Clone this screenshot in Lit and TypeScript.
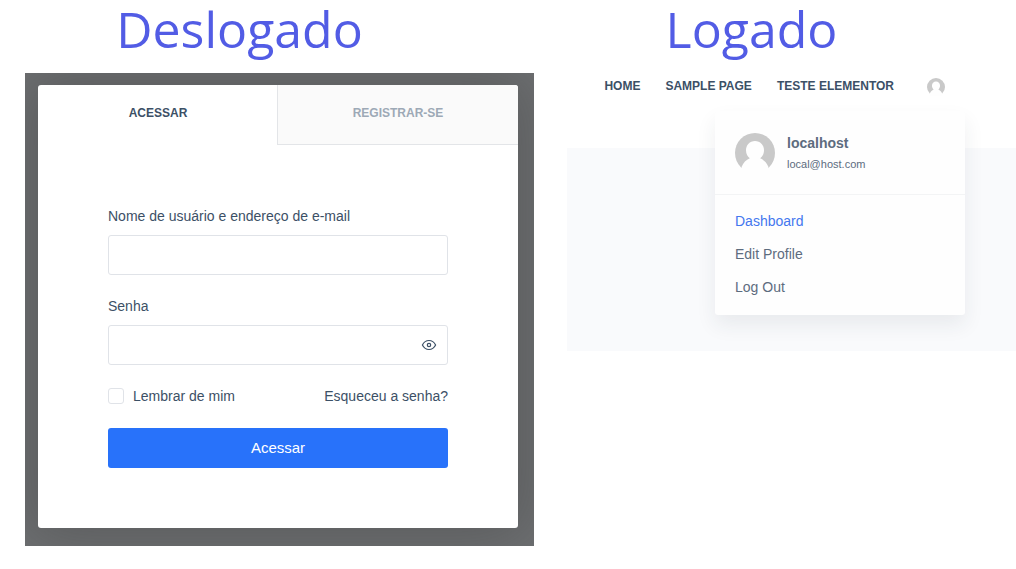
import { LitElement, html, css } from "lit";
import { customElement, state } from "lit/decorators.js";

const base = css`
  :host {
    display: block;
    font-family: "Liberation Sans", Arial, sans-serif;
    font-size: 14px;
    line-height: 22px;
    color: #3c5066;
  }
  * {
    box-sizing: border-box;
  }
  a {
    color: inherit;
    text-decoration: none;
  }
`;

@customElement("user-avatar")
export class UserAvatar extends LitElement {
  static styles = css`
    :host {
      display: block;
    }
    svg {
      display: block;
      width: 100%;
      height: 100%;
    }
  `;

  render() {
    return html`
      <svg viewBox="0 0 40 40" aria-hidden="true">
        <circle cx="20" cy="20" r="20" fill="#c9c9c9" />
        <path
          fill="#fefefe"
          d="M20 8c5.200 0 9 4.100 9 9.300 0 3.400-1.500 6.300-3.800 8 3.800 1.600 6.300 4.200 8.300 8.700V41H6.500v-7c2-4.500 4.500-7.100 8.300-8.700-2.300-1.700-3.800-4.600-3.800-8C11 12.100 14.800 8 20 8z"
        />
      </svg>
    `;
  }
}

@customElement("login-modal")
export class LoginModal extends LitElement {
  @state() private reveal = false;

  static styles = [
    base,
    css`
      .overlay {
        padding: 12px 16px 18px 13px;
        background: #6e7072;
        overflow: hidden;
      }
      .card {
        background: #fff;
        border-radius: 3px;
        box-shadow: 0 0 60px 10px rgba(60, 60, 60, 0.4);
      }
      .tabs {
        display: grid;
        grid-template-columns: 1fr 1fr;
      }
      .tab {
        height: 60px;
        padding: 0 0 4px;
        border: 0;
        background: none;
        border-radius: 3px 0 0 0;
        font: bold 12px/20px "Liberation Sans", Arial, sans-serif;
        text-transform: uppercase;
        color: #3c5066;
      }
      .tab.idle {
        background: #fafafa;
        border-left: 1px solid #e3e5e8;
        border-bottom: 1px solid #e3e5e8;
        border-radius: 0 3px 0 0;
        margin-left: -1px;
        color: #9da9b6;
      }
      form {
        display: grid;
        gap: 20px;
        padding: 60px 70px;
      }
      .field {
        display: grid;
        gap: 8px;
      }
      .control {
        display: grid;
        grid-template-columns: 1fr 38px;
        align-items: center;
      }
      .input {
        width: 100%;
        height: 40px;
        padding: 0 12px;
        border: 1px solid #e0e3e8;
        border-radius: 3px;
        background: #fff;
        font: inherit;
        color: inherit;
        outline-color: #2872fa;
      }
      .control .input {
        grid-area: 1 / 1 / 2 / 3;
        padding-right: 40px;
      }
      .reveal {
        grid-area: 1 / 2;
        display: grid;
        place-items: center;
        height: 38px;
        padding: 0;
        border: 0;
        background: none;
        color: #3c5066;
      }
      .eye {
        width: 16px;
        height: 16px;
      }
      .row {
        display: flex;
        align-items: flex-start;
        justify-content: space-between;
        min-height: 23px;
      }
      .remember {
        display: flex;
        align-items: center;
        gap: 9px;
      }
      .check {
        appearance: none;
        width: 16px;
        height: 16px;
        margin: 0;
        border: 1px solid #e0e3e8;
        border-radius: 3px;
        background: #fff;
      }
      .check:checked {
        background: #2872fa;
      }
      .submit {
        height: 40px;
        border: 0;
        border-radius: 3px;
        background: #2872fa;
        color: #fff;
        font: 15px/20px "Liberation Sans", Arial, sans-serif;
      }
    `,
  ];

  render() {
    return html`
      <div class="overlay">
        <div class="card">
          <div class="tabs">
            <button class="tab" type="button">Acessar</button>
            <button class="tab idle" type="button">Registrar-se</button>
          </div>
          <form @submit=${(e: Event) => e.preventDefault()}>
            <div class="field">
              <label for="user">Nome de usuário e endereço de e-mail</label>
              <input class="input" id="user" type="text" />
            </div>
            <div class="field">
              <label for="pass">Senha</label>
              <div class="control">
                <input class="input" id="pass" type=${this.reveal ? "text" : "password"} />
                <button
                  class="reveal"
                  type="button"
                  @click=${() => (this.reveal = !this.reveal)}
                >
                  <svg class="eye" viewBox="0 0 16 16" fill="none" stroke="currentColor" stroke-width="1.2" aria-hidden="true">
                    <path d="M1.400 8C2.900 5 5.200 3.500 8 3.500S13.100 5 14.600 8C13.100 11 10.800 12.500 8 12.500S2.900 11 1.400 8z" />
                    <circle cx="8" cy="8" r="1.700" />
                  </svg>
                </button>
              </div>
            </div>
            <div class="row">
              <label class="remember" for="remember">
                <input class="check" id="remember" type="checkbox" />
                Lembrar de mim
              </label>
              <a href="#">Esqueceu a senha?</a>
            </div>
            <button class="submit" type="submit">Acessar</button>
          </form>
        </div>
      </div>
    `;
  }
}

@customElement("site-preview")
export class SitePreview extends LitElement {
  static styles = [
    base,
    css`
      .bar {
        display: flex;
        justify-content: flex-end;
        align-items: flex-start;
        gap: 33px;
        height: 75px;
        padding: 4px 71px 0 0;
      }
      .nav {
        display: flex;
        gap: 25px;
        font-size: 12px;
        font-weight: bold;
        line-height: 18px;
        text-transform: uppercase;
        white-space: nowrap;
      }
      .account {
        position: relative;
      }
      .small {
        width: 18px;
        height: 18px;
        margin-top: 1px;
      }
      .menu {
        position: absolute;
        top: 34px;
        right: -20px;
        width: 250px;
        border-radius: 3px;
        background: #fefefe;
        box-shadow: 0 10px 20px rgba(41, 51, 61, 0.08);
        color: #5d6c7e;
      }
      .profile {
        display: flex;
        align-items: center;
        gap: 12px;
        height: 84px;
        padding: 0 20px;
        border-bottom: 1px solid #f3f4f5;
      }
      .large {
        width: 40px;
        height: 40px;
      }
      .name {
        display: block;
        line-height: 22px;
      }
      .mail {
        display: block;
        font-size: 11px;
        line-height: 20px;
      }
      .links {
        display: grid;
        gap: 11px;
        padding: 15px 20px 17px;
      }
      .current {
        color: #4477ef;
      }
      .hero {
        height: 203px;
        background: #f9fafc;
      }
    `,
  ];

  render() {
    return html`
      <header class="bar">
        <nav class="nav">
          <a href="#">Home</a>
          <a href="#">Sample Page</a>
          <a href="#">Teste Elementor</a>
        </nav>
        <div class="account">
          <user-avatar class="small"></user-avatar>
          <div class="menu">
            <div class="profile">
              <user-avatar class="large"></user-avatar>
              <div>
                <strong class="name">localhost</strong>
                <span class="mail">local@host.com</span>
              </div>
            </div>
            <div class="links">
              <a class="current" href="#">Dashboard</a>
              <a href="#">Edit Profile</a>
              <a href="#">Log Out</a>
            </div>
          </div>
        </div>
      </header>
      <div class="hero"></div>
    `;
  }
}

@customElement("app-root")
export class AppRoot extends LitElement {
  static styles = css`
    :host {
      display: block;
      min-height: 100vh;
      background: #fff;
    }
    .page {
      display: grid;
      grid-template-columns: 509fr 449fr;
      gap: 33px;
      padding-left: 25px;
    }
    .title {
      margin: 0;
      padding: 0 80px 15px 0;
      font: 400 50px/58px "Open Sans", sans-serif;
      text-align: center;
      color: #525ce5;
    }
  `;

  render() {
    return html`
      <main class="page">
        <section>
          <h1 class="title">Deslogado</h1>
          <login-modal></login-modal>
        </section>
        <section>
          <h1 class="title">Logado</h1>
          <site-preview></site-preview>
        </section>
      </main>
    `;
  }
}
